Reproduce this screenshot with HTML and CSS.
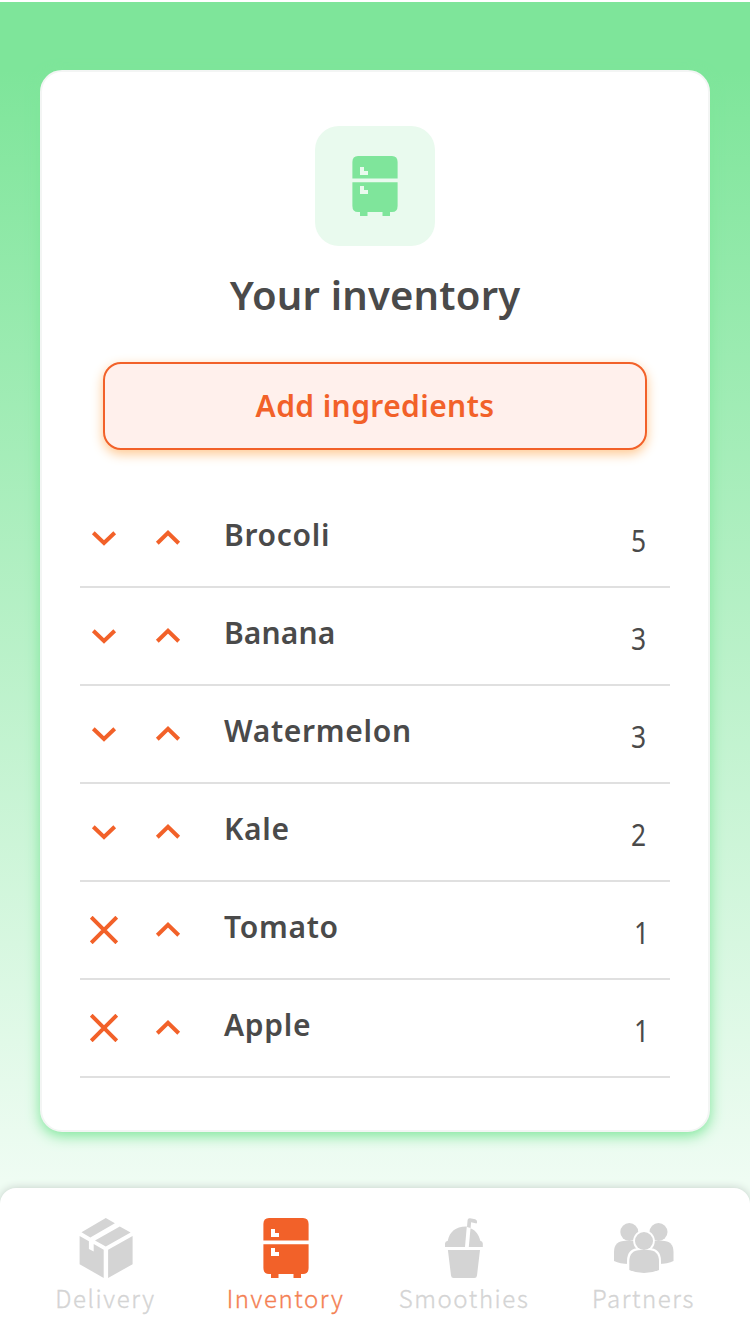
FILE: index.html
```html
<!DOCTYPE html>
<html lang="en">
<head>
<meta charset="utf-8">
<title>Your inventory</title>
<link rel="stylesheet" href="styles.css">
</head>
<body>
<svg class="defs" aria-hidden="true">
  <symbol id="fridge" viewBox="0 0 46 60">
    <path fill="currentColor" fill-rule="evenodd" d="M6 0H40Q45.6 0 45.6 6V22.5H.4V6Q.4 0 6 0ZM8 11V19H16V15H12V11Z"/>
    <path fill="currentColor" fill-rule="evenodd" d="M.4 26.2H45.6V50Q45.6 56 40 56H38V60H30.5V56H15.5V60H8V56H6Q.4 56 .4 50ZM8 30V38H16V34H12V30Z"/>
  </symbol>
  <symbol id="down" viewBox="0 0 28 28"><path class="line" d="M3.3 8.8L14 19L24.7 8.8"/></symbol>
  <symbol id="up" viewBox="0 0 28 28"><path class="line" d="M3.3 19.2L14 8.8L24.7 19.2"/></symbol>
  <symbol id="remove" viewBox="0 0 28 28"><path class="line" d="M1.2 1.2L26.8 26.8M26.8 1.2L1.2 26.8"/></symbol>
</svg>
<main class="card">
  <div class="badge"><svg class="fridge"><use href="#fridge"/></svg></div>
  <h1 class="title">Your inventory</h1>
  <button class="add">Add ingredients</button>
  <ul class="list">
    <li class="row"><svg class="icon"><use href="#down"/></svg><svg class="icon"><use href="#up"/></svg><span class="name">Brocoli</span><span class="count">5</span></li>
    <li class="row"><svg class="icon"><use href="#down"/></svg><svg class="icon"><use href="#up"/></svg><span class="name tight">Banana</span><span class="count">3</span></li>
    <li class="row"><svg class="icon"><use href="#down"/></svg><svg class="icon"><use href="#up"/></svg><span class="name">Watermelon</span><span class="count">3</span></li>
    <li class="row"><svg class="icon"><use href="#down"/></svg><svg class="icon"><use href="#up"/></svg><span class="name">Kale</span><span class="count">2</span></li>
    <li class="row"><svg class="icon"><use href="#remove"/></svg><svg class="icon"><use href="#up"/></svg><span class="name">Tomato</span><span class="count one">1</span></li>
    <li class="row"><svg class="icon"><use href="#remove"/></svg><svg class="icon"><use href="#up"/></svg><span class="name">Apple</span><span class="count one">1</span></li>
  </ul>
</main>
<nav class="tabs">
  <a class="tab">
    <svg class="tab-icon" viewBox="0 0 60 60" fill="currentColor"><path d="M29.8 0L38.9 5.2L14.3 19.5L5.5 14.2ZM43.8 8.5L54.6 14.4L29.8 28.5L19 22.6ZM3.6 18L12.9 23.2V31L17.7 33.4V26L27.7 31.7V60L3.6 46.2ZM32.1 31.7L56.6 18V46.2L32.1 60Z"/></svg>
    <span>Delivery</span>
  </a>
  <a class="tab active">
    <svg class="fridge"><use href="#fridge"/></svg>
    <span>Inventory</span>
  </a>
  <a class="tab">
    <svg class="tab-icon" viewBox="0 0 60 60" fill="currentColor"><path d="M13.9 32H46L43 57.4Q42.7 60 40.4 60H19.6Q17.3 60 17 57.4ZM11 29V25.5Q11 23.5 13.8 22.8C15.5 13.8 22 8.2 32.8 8.5L31 29ZM36.5 10.2C42 12.5 45 17 46.3 22.8Q48.8 23.5 48.8 25.5V29H34.8ZM33.6 2Q33.8 0 36 .2L41.2 1.3Q43.5 2 43 4.7L42.5 5.4L37.1 4.3L36.6 10L33 9Z"/></svg>
    <span>Smoothies</span>
  </a>
  <a class="tab">
    <svg class="tab-icon" viewBox="0 0 60 60" fill="currentColor"><circle cx="15.3" cy="14" r="9"/><circle cx="44.5" cy="14" r="9"/><path d="M0 43V34Q0 22.8 12 22.8H48Q59.5 22.8 59.5 34V43Q54 46 44 46H15Q6 46 0 43Z"/><circle class="gap" cx="30" cy="23" r="9.8"/><path class="gap" d="M14 50V43Q14 31 26 31H34Q46 31 46 43V50Q40 56 30 56Q20 56 14 50Z"/><circle cx="30" cy="23" r="9"/><path d="M15.3 52V43.5Q15.3 32 26.8 32H33.8Q45 32 45 43.5V52Q38 55 30 55Q22 55 15.3 52Z"/></svg>
    <span>Partners</span>
  </a>
</nav>
</body>
</html>
```
FILE: styles.css
```css
* { box-sizing: border-box; }
body {
  margin: 0;
  height: 1336px;
  overflow: hidden;
  display: flex;
  flex-direction: column;
  border-top: 2px solid #fff;
  padding-top: 68px;
  background: linear-gradient(#7ee59a 70px, #effcf3 1180px);
  font-family: "Noto Sans", sans-serif;
  color: #4a4a4a;
}
.defs { position: absolute; width: 0; height: 0; }
.card {
  width: 670px;
  height: 1062px;
  margin: 0 40px;
  padding: 54px 38px 0;
  border: 2px solid #f3f5f4;
  border-radius: 22px;
  background: #fff;
  box-shadow: 0 4px 14px #7ee69a;
  display: flex;
  flex-direction: column;
  align-items: center;
}
.badge {
  width: 120px;
  height: 120px;
  border-radius: 24px;
  background: #e9faee;
  color: #7fe59b;
  display: flex;
  align-items: center;
  justify-content: center;
}
.fridge { width: 46px; height: 60px; display: block; }
.title {
  margin: 19px 0 0;
  height: 60px;
  line-height: 60px;
  font-size: 40px;
  font-weight: 600;
  letter-spacing: .2px;
  white-space: nowrap;
}
.add {
  width: 544px;
  height: 88px;
  margin: 37px 0 40px;
  padding: 0 0 2px;
  border: 2px solid #f26129;
  border-radius: 18px;
  background: #fff0ec;
  box-shadow: 0 4px 12px #ffc890;
  color: #f26129;
  font: 600 30px "Noto Sans", sans-serif;
  letter-spacing: .4px;
}
.list { list-style: none; margin: 0; padding: 0; width: 590px; }
.row {
  height: 98px;
  padding: 0 24px 0 10px;
  border-bottom: 2px solid #e0e0e0;
  display: flex;
  align-items: center;
}
.icon { width: 28px; height: 28px; margin-right: 36px; color: #f26129; }
.line { fill: none; stroke: currentColor; stroke-width: 4; }
.name {
  margin-left: 6px;
  padding-bottom: 6px;
  font-size: 30px;
  line-height: 44px;
  font-weight: 600;
  letter-spacing: .7px;
}
.tight { letter-spacing: .1px; }
.count {
  margin-left: auto;
  padding-top: 6px;
  font-size: 30px;
  line-height: 44px;
  transform: scaleX(.88);
  transform-origin: right;
}
.one { margin-right: -3px; }
.tabs {
  height: 148px;
  margin-top: 56px;
  padding: 30px 16px 0;
  border-radius: 16px 16px 0 0;
  background: #fff;
  box-shadow: 0 0 8px #c4cec8;
  display: grid;
  grid-template-columns: 179px 181px 176px 183px;
  justify-content: start;
}
.tab {
  display: flex;
  flex-direction: column;
  align-items: center;
  color: #d4d4d4;
  font-family: "Noto Sans CJK JP", "Noto Sans", sans-serif;
  font-size: 24px;
  line-height: 40px;
  letter-spacing: 1.6px;
  font-weight: 300;
  -webkit-text-stroke: .35px currentColor;
  white-space: nowrap;
}
.tab-icon { width: 60px; height: 60px; }
.active { color: #f26129; }
.active span { opacity: .8; }
.gap { fill: #fff; stroke: #fff; stroke-width: 2; }
```
